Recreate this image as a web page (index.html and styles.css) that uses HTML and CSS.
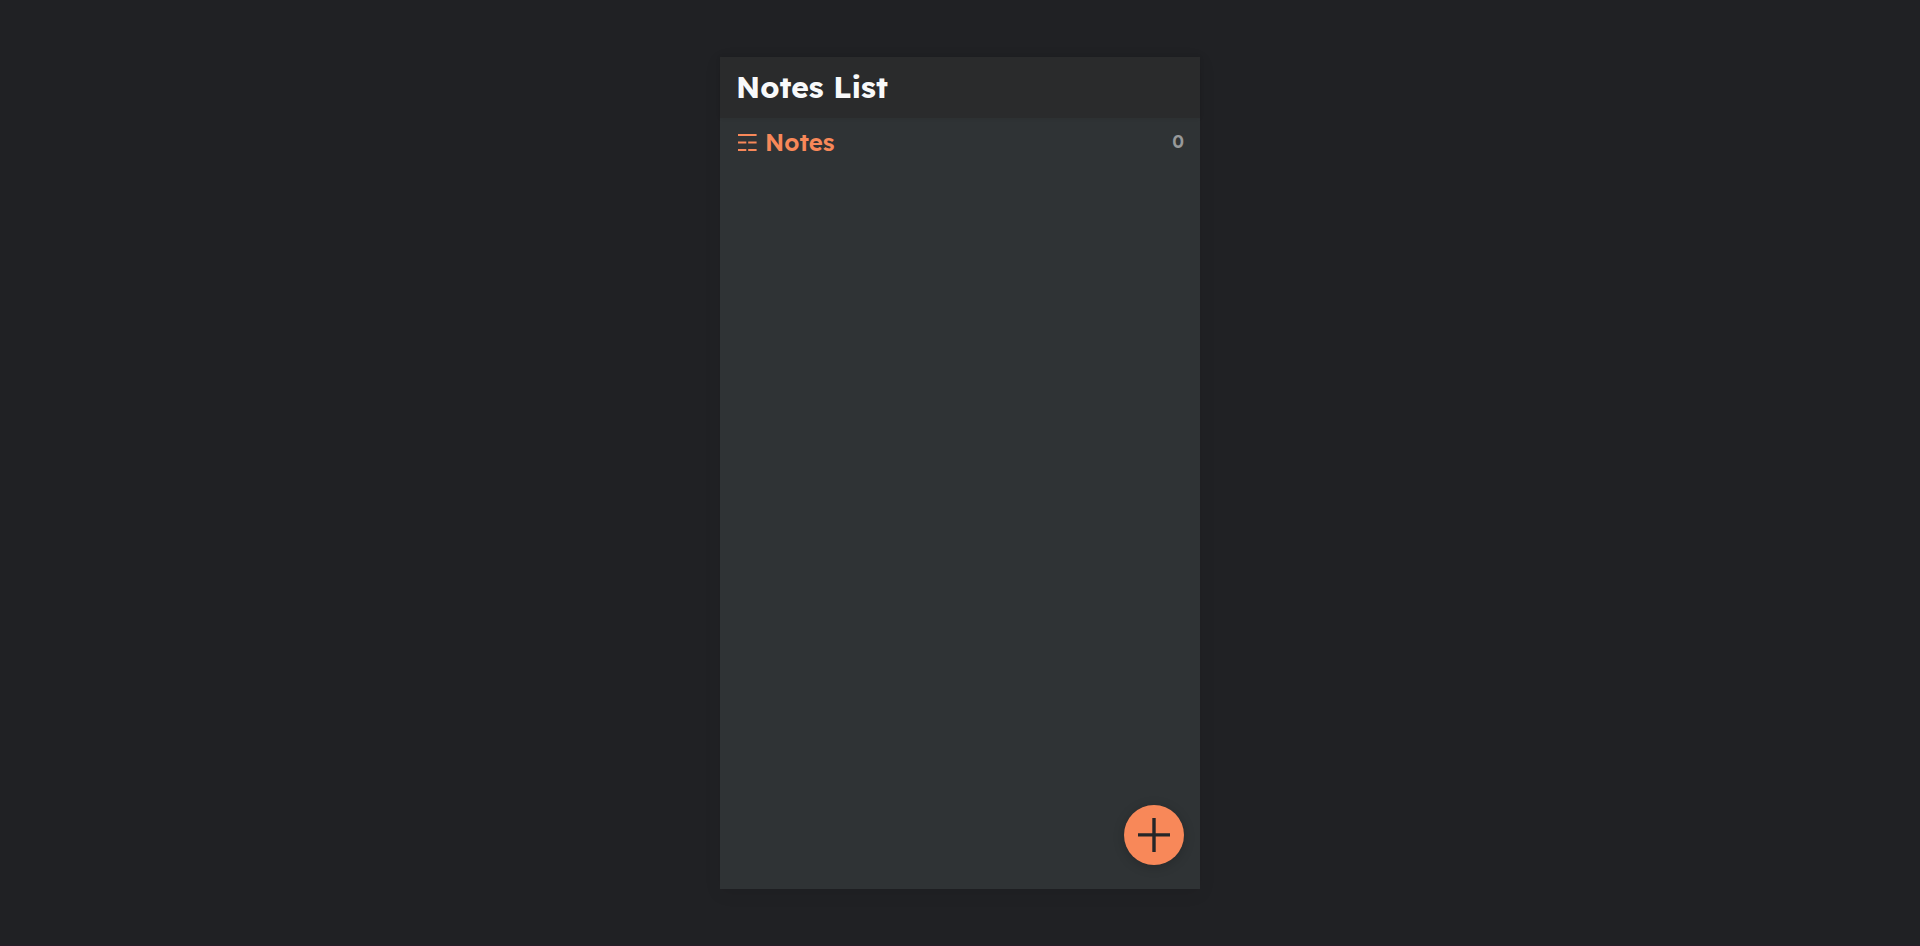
FILE: index.html
```html
<!DOCTYPE html>
<html lang="en">
<head>
<meta charset="utf-8">
<meta name="viewport" content="width=device-width, initial-scale=1">
<title>Notes List</title>
<link rel="stylesheet" href="styles.css">
</head>
<body>
<main class="app">
  <header class="app-header">
    <h1 class="app-title">Notes List</h1>
  </header>
  <section class="notes">
    <div class="notes-bar">
      <h2 class="notes-heading">
        <svg class="notes-icon" viewBox="0 0 19 18" aria-hidden="true">
          <path d="M0 1h18.6v2H0zM0 8.4h8.3v2H0zM10.2 8.4h8.4v2h-8.4zM0 16h8.3v2H0zM10.2 16h8.4v2h-8.4z"/>
        </svg>
        Notes
      </h2>
      <span class="notes-count">0</span>
    </div>
  </section>
  <button class="add-button" type="button" aria-label="Add note">
    <svg class="add-icon" viewBox="0 0 32 34" aria-hidden="true">
      <path d="M14.3 0h3.4v34h-3.4zM0 15.2h32v3.4H0z"/>
    </svg>
  </button>
</main>
</body>
</html>
```
FILE: styles.css
```css
* {
  box-sizing: border-box;
}

body {
  margin: 0;
  min-height: 100vh;
  display: flex;
  align-items: center;
  justify-content: center;
  background: #202124;
  box-shadow: inset 0 -1px #281c28;
  font-family: Lexend, Inter, "Open Sans", sans-serif;
}

.app {
  position: relative;
  width: 100%;
  max-width: 480px;
  height: 88vh;
  background: #2f3335;
  box-shadow: 0 4px 16px rgba(0, 0, 0, 0.08);
}

.app-header {
  padding: 12px 16px;
  background: #2a2b2c;
  box-shadow: 0 0 4px rgba(0, 0, 0, 0.1);
}

.app-title {
  margin: 0;
  font-size: 30px;
  font-weight: 700;
  line-height: 37px;
  color: #f8f9fa;
}

.notes-bar {
  display: flex;
  align-items: center;
  justify-content: space-between;
  padding: 8px 16px;
}

.notes-heading {
  display: flex;
  align-items: center;
  gap: 8px;
  margin: 0;
  padding-left: 2px;
  font-size: 24px;
  font-weight: 600;
  line-height: 32px;
  color: #f88859;
}

.notes-icon {
  width: 19px;
  height: 18px;
  fill: currentColor;
}

.notes-count {
  font-size: 18px;
  font-weight: 600;
  line-height: 32px;
  color: #97999a;
}

.add-button {
  position: absolute;
  right: 16px;
  bottom: 24px;
  display: grid;
  place-items: center;
  width: 60px;
  height: 60px;
  padding: 0;
  border: 0;
  border-radius: 50%;
  background: #f88859;
  box-shadow: 0 2px 12px rgba(0, 0, 0, 0.2);
  cursor: pointer;
}

.add-icon {
  width: 32px;
  height: 34px;
  fill: #252628;
}
```
